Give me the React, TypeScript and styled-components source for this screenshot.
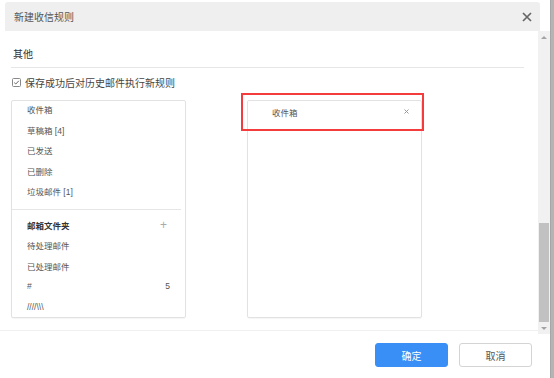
import React from 'react';
import styled, { createGlobalStyle } from 'styled-components';

const GlobalStyle = createGlobalStyle`
  html, body {
    margin: 0;
    padding: 0;
    background: #ffffff;
  }
  body {
    font-family: "Liberation Sans", "Noto Sans CJK SC", sans-serif;
    color: #444;
  }
`;

//<editor-fold desc="Styles">
const Window = styled.div`
  display: flex;
  width: 554px;
  height: 378px;
  overflow: hidden;
`;

const Dialog = styled.div`
  width: 550px;
  display: flex;
  flex-direction: column;
  background: #fff;
`;

const Edge = styled.div`
  width: 4px;
  background: #b4b4b4;
  border-left: 1px solid #a6a6a6;
  box-sizing: border-box;
`;

const Header = styled.div`
  margin: 2px 10px 0 5px;
  height: 29px;
  background: #efefef;
  border-radius: 3px 3px 0 0;
  display: flex;
  align-items: center;
  justify-content: space-between;
  padding: 0 8px 0 9px;
  box-sizing: border-box;
`;

const Title = styled.div`
  font-size: 10px;
  color: #555;
`;

const Main = styled.div`
  display: flex;
  height: 303px;
`;

const Content = styled.div`
  flex: 1;
  height: 299px;
  padding: 0 14px 0 11px;
  border-bottom: 1px solid #f0f0f0;
`;

const SectionTitle = styled.div`
  margin-top: 17px;
  padding: 0 0 5px 2px;
  line-height: 14px;
  font-size: 10px;
  color: #333;
  border-bottom: 1px solid #e6e6e6;
`;

const CheckRow = styled.label`
  display: flex;
  align-items: center;
  gap: 4px;
  margin-top: 7px;
  height: 14px;
  font-size: 10px;
  color: #444;
`;

const Box = styled.span`
  width: 9px;
  height: 9px;
  margin-left: 1px;
  display: flex;
  align-items: center;
  justify-content: center;
`;

const Panels = styled.div`
  display: flex;
  gap: 61px;
  margin-top: 11px;
`;

const Panel = styled.div`
  position: relative;
  width: 175px;
  height: 218px;
  box-sizing: border-box;
  border: 1px solid #e2e2e2;
  border-radius: 2px;
  box-shadow: 0 1px 1px rgba(0, 0, 0, 0.04);
`;

const List = styled.div`
  margin-top: -2px;
`;

const Item = styled.div<{ $bold?: boolean }>`
  height: 20.5px;
  display: flex;
  align-items: center;
  justify-content: space-between;
  padding: 0 15px 0 15px;
  font-size: 8.5px;
  color: ${p => (p.$bold ? '#333' : '#555')};
  font-weight: ${p => (p.$bold ? 700 : 400)};
`;

const Divider = styled.div`
  height: 1px;
  background: #e6e6e6;
  margin: 7px 4px 5px 0;
`;

const Plus = styled.span`
  font-size: 12px;
  font-weight: 300;
  color: #aaa;
  margin-right: 3px;
`;

const Picked = styled.div`
  height: 21px;
  display: flex;
  align-items: center;
  justify-content: space-between;
  padding: 0 12px 0 24px;
  font-size: 8.5px;
  color: #555;
`;

const Highlight = styled.div`
  position: absolute;
  left: -7px;
  top: -8px;
  width: 183px;
  height: 38px;
  box-sizing: border-box;
  border: 2px solid #f53c3c;
  pointer-events: none;
`;

const ScrollBar = styled.div`
  width: 12px;
  background: #f1f1f1;
  display: flex;
  flex-direction: column;
`;

const Arrow = styled.div<{ $down?: boolean }>`
  height: 12px;
  display: flex;
  align-items: center;
  justify-content: center;
  &::after {
    content: '';
    border-left: 3px solid transparent;
    border-right: 3px solid transparent;
    ${p => (p.$down ? 'border-top' : 'border-bottom')}: 3px solid #a3a3a3;
  }
`;

const Track = styled.div`
  flex: 1;
  display: flex;
  flex-direction: column;
  justify-content: flex-end;
`;

const Thumb = styled.div`
  height: 99px;
  margin: 0 1px;
  background: #c1c1c1;
`;

const Footer = styled.div`
  display: flex;
  justify-content: flex-end;
  gap: 11px;
  padding: 9px 18px 0 0;
`;

const Button = styled.button<{ $primary?: boolean }>`
  width: 73px;
  height: 24px;
  box-sizing: border-box;
  border-radius: 3px;
  font-family: inherit;
  font-size: 10px;
  cursor: pointer;
  border: 1px solid ${p => (p.$primary ? '#3a8ff7' : '#d4d4d4')};
  background: ${p => (p.$primary ? '#3a8ff7' : '#fff')};
  color: ${p => (p.$primary ? '#fff' : '#555')};
`;
//</editor-fold>

const mailboxes = ['收件箱', '草稿箱 [4]', '已发送', '已删除', '垃圾邮件 [1]'];
const folders: { name: string; count?: number }[] = [
    { name: '待处理邮件' },
    { name: '已处理邮件' },
    { name: '#', count: 5 },
    { name: '////\\\\\\' },
];

const CloseIcon = () => (
    <svg width="10" height="10" viewBox="0 0 10 10">
        <path d="M1 1 L9 9 M9 1 L1 9" stroke="#666" strokeWidth="1.7" />
    </svg>
);

const RemoveIcon = () => (
    <svg width="5" height="5" viewBox="0 0 5 5">
        <path d="M0.5 0.5 L4.5 4.5 M4.5 0.5 L0.5 4.5" stroke="#999" strokeWidth="1" />
    </svg>
);

const CheckIcon = () => (
    <svg width="9" height="9" viewBox="0 0 9 9">
        <rect x="0.5" y="0.5" width="8" height="8" rx="1" fill="#fff" stroke="#888" />
        <path d="M2.2 4.6 L3.8 6 L6.8 2.8" fill="none" stroke="#666" strokeWidth="1" />
    </svg>
);

export default function App() {
    return (
        <>
            <GlobalStyle />
            <Window>
                <Dialog>
                    <Header>
                        <Title>新建收信规则</Title>
                        <CloseIcon />
                    </Header>
                    <Main>
                        <Content>
                            <SectionTitle>其他</SectionTitle>
                            <CheckRow>
                                <Box><CheckIcon /></Box>
                                保存成功后对历史邮件执行新规则
                            </CheckRow>
                            <Panels>
                                <Panel>
                                    <List>
                                        {mailboxes.map(m => (
                                            <Item key={m}>{m}</Item>
                                        ))}
                                        <Divider />
                                        <Item $bold>
                                            邮箱文件夹
                                            <Plus>+</Plus>
                                        </Item>
                                        {folders.map(f => (
                                            <Item key={f.name}>
                                                {f.name}
                                                {f.count !== undefined && <span>{f.count}</span>}
                                            </Item>
                                        ))}
                                    </List>
                                </Panel>
                                <Panel>
                                    <Picked>
                                        收件箱
                                        <RemoveIcon />
                                    </Picked>
                                    <Highlight />
                                </Panel>
                            </Panels>
                        </Content>
                        <ScrollBar>
                            <Arrow />
                            <Track>
                                <Thumb />
                            </Track>
                            <Arrow $down />
                        </ScrollBar>
                    </Main>
                    <Footer>
                        <Button $primary>确定</Button>
                        <Button>取消</Button>
                    </Footer>
                </Dialog>
                <Edge />
            </Window>
        </>
    );
}
